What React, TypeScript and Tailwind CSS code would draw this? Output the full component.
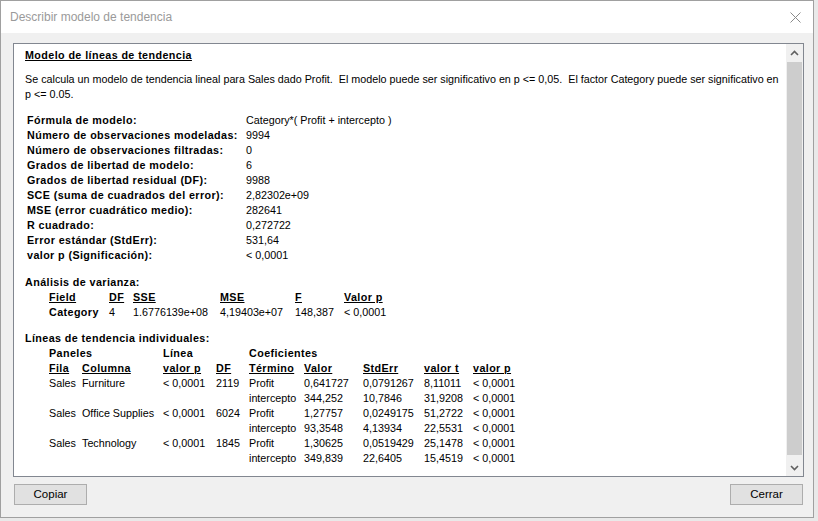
import * as React from "react";

const font = { fontFamily: '"Liberation Sans", Arial, sans-serif' };

const summary: [string, string][] = [
  ["Fórmula de modelo:", "Category*( Profit + intercepto )"],
  ["Número de observaciones modeladas:", "9994"],
  ["Número de observaciones filtradas:", "0"],
  ["Grados de libertad de modelo:", "6"],
  ["Grados de libertad residual (DF):", "9988"],
  ["SCE (suma de cuadrados del error):", "2,82302e+09"],
  ["MSE (error cuadrático medio):", "282641"],
  ["R cuadrado:", "0,272722"],
  ["Error estándar (StdErr):", "531,64"],
  ["valor p (Significación):", "< 0,0001"],
];

const lines = [
  ["Sales", "Furniture", "< 0,0001", "2119", "Profit", "0,641727", "0,0791267", "8,11011", "< 0,0001"],
  ["", "", "", "", "intercepto", "344,252", "10,7846", "31,9208", "< 0,0001"],
  ["Sales", "Office Supplies", "< 0,0001", "6024", "Profit", "1,27757", "0,0249175", "51,2722", "< 0,0001"],
  ["", "", "", "", "intercepto", "93,3548", "4,13934", "22,5531", "< 0,0001"],
  ["Sales", "Technology", "< 0,0001", "1845", "Profit", "1,30625", "0,0519429", "25,1478", "< 0,0001"],
  ["", "", "", "", "intercepto", "349,839", "22,6405", "15,4519", "< 0,0001"],
];

const lineCols = "grid grid-cols-[33px_81px_53px_33px_55px_59px_61px_49px_60px]";
const bold = "font-bold tracking-[0.4px]";

function Chevron({ up }: { up?: boolean }) {
  return (
    <svg width="9" height="6" viewBox="0 0 9 6">
      <path d={up ? "M1 5 L4.5 1.5 L8 5" : "M1 1 L4.5 4.5 L8 1"} fill="none" stroke="#606060" strokeWidth="1.6" />
    </svg>
  );
}

export default function App() {
  return (
    <div className="w-[818px] h-[521px] bg-[#e9e9e9] overflow-hidden text-black" style={font}>
      <div className="w-[814px] h-[518px] border border-[#a0a0a0] bg-[#f0f0f0] flex flex-col">
        <div className="h-[32px] bg-white flex items-center justify-between pl-[9px] pr-[12px]">
          <span className="text-[12px] text-[#9a9a9a]">Describir modelo de tendencia</span>
          <svg width="11" height="11" viewBox="0 0 11 11">
            <path d="M0.5 0.5 L10.5 10.5 M10.5 0.5 L0.5 10.5" stroke="#8a8a8a" strokeWidth="1" />
          </svg>
        </div>

        <div className="flex-1 flex flex-col px-[12px] pt-[10px]">
          <div className="h-[434px] w-[791px] border border-[#828790] bg-white flex">
            <div className="flex-1 min-w-0 overflow-hidden pl-[11px] pt-[4px] text-[10.75px] leading-[15px]">
              <div className={`${bold} underline`}>Modelo de líneas de tendencia</div>
              <div className="mt-[9px] whitespace-pre">
                Se calcula un modelo de tendencia lineal para Sales dado Profit.  El modelo puede ser significativo en p {"<="} 0,05.  El factor Category puede ser significativo en
                {"\n"}p {"<="} 0.05.
              </div>

              <div className="mt-[11px] pl-[2px]">
                {summary.map(([k, v]) => (
                  <div key={k} className="grid grid-cols-[219px_1fr]">
                    <span className={`${bold} whitespace-nowrap`}>{k}</span>
                    <span>{v}</span>
                  </div>
                ))}
              </div>

              <div className={`mt-[12px] ${bold}`}>Análisis de varianza:</div>
              <div className="pl-[24px]">
                <div className={`grid grid-cols-[60px_24px_87px_75px_49px_60px] ${bold}`}>
                  <span className="underline">Field</span>
                  <span className="underline">DF</span>
                  <span className="underline">SSE</span>
                  <span className="underline">MSE</span>
                  <span className="underline">F</span>
                  <span className="underline">Valor p</span>
                </div>
                <div className="grid grid-cols-[60px_24px_87px_75px_49px_60px]">
                  <span className={bold}>Category</span>
                  <span>4</span>
                  <span>1.6776139e+08</span>
                  <span>4,19403e+07</span>
                  <span>148,387</span>
                  <span>{"< 0,0001"}</span>
                </div>
              </div>

              <div className={`mt-[11px] ${bold}`}>Líneas de tendencia individuales:</div>
              <div className="pl-[24px]">
                <div className={`grid grid-cols-[114px_86px_1fr] ${bold}`}>
                  <span>Paneles</span>
                  <span>Línea</span>
                  <span>Coeficientes</span>
                </div>
                <div className={`${lineCols} ${bold}`}>
                  {["Fila", "Columna", "valor p", "DF", "Término", "Valor", "StdErr", "valor t", "valor p"].map((h, i) => (
                    <span key={i} className="underline whitespace-nowrap">{h}</span>
                  ))}
                </div>
                {lines.map((r, i) => (
                  <div key={i} className={`${lineCols} h-[15px]`}>
                    {r.map((c, j) => (
                      <span key={j} className="whitespace-nowrap">{c}</span>
                    ))}
                  </div>
                ))}
              </div>
            </div>

            <div className="w-[17px] shrink-0 bg-[#f0f0f0] flex flex-col items-center">
              <div className="h-[17px] flex items-center justify-center"><Chevron up /></div>
              <div className="flex-1 w-[15px] bg-[#cdcdcd] mt-[1px] mb-[4px]" />
              <div className="h-[17px] flex items-center justify-center"><Chevron /></div>
            </div>
          </div>

          <div className="flex justify-between mt-[7px] pl-[1px] pr-[1px] w-[791px]">
            <button className="w-[73px] h-[21px] border border-[#adadad] bg-[#e1e1e1] text-[11.5px]">Copiar</button>
            <button className="w-[73px] h-[21px] border border-[#adadad] bg-[#e1e1e1] text-[11.5px]">Cerrar</button>
          </div>
        </div>
      </div>
    </div>
  );
}
